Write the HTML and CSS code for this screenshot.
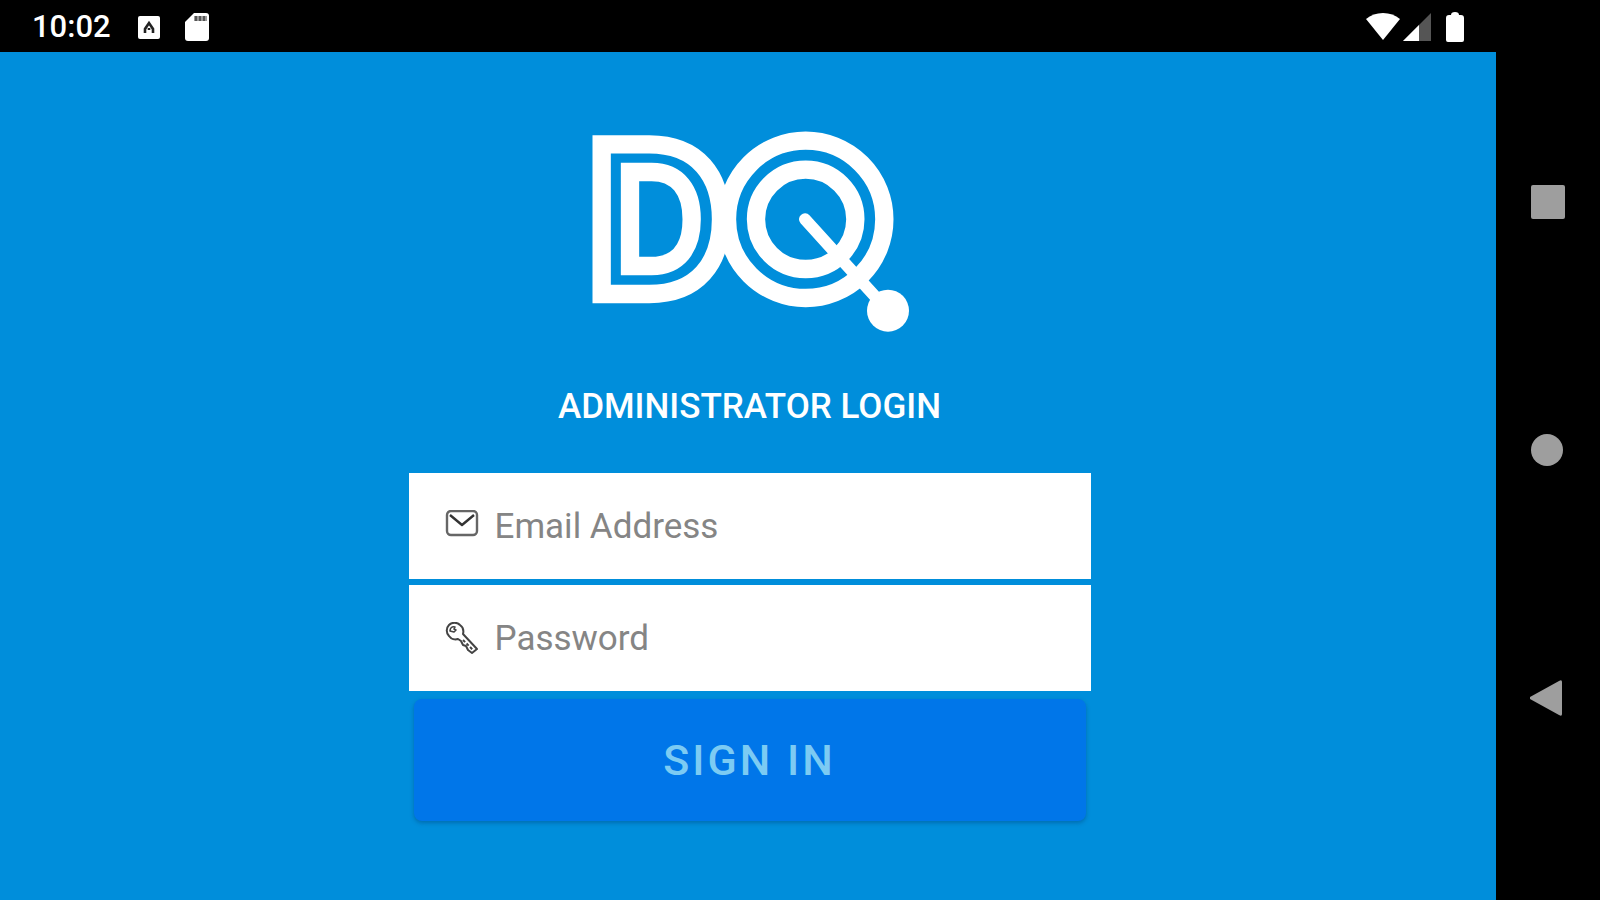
FILE: index.html
```html
<!DOCTYPE html>
<html lang="en">
<head>
<meta charset="utf-8">
<meta name="viewport" content="width=device-width, initial-scale=1">
<title>Administrator Login</title>
<link rel="stylesheet" href="styles.css">
</head>
<body>
<div class="screen">
  <div class="app">
    <header class="status">
      <time class="clock">10:02</time>
      <svg class="notice" width="22" height="23" viewBox="0 0 22 23" aria-hidden="true"><rect width="22" height="23" rx="2" fill="#fff"/><path d="M7 17V13L11 7L15 13V17M11 12V14" fill="none" stroke="#222" stroke-width="2.6"/></svg>
      <svg class="card" width="24" height="28" viewBox="0 0 24 28" aria-hidden="true"><path d="M9 0H21Q24 0 24 3V25Q24 28 21 28H3Q0 28 0 25V9Z" fill="#fff"/><path d="M9 3H22V8H9Z" fill="#999"/><path d="M11 3V8M15 3V8M19 3V8" stroke="#555" stroke-width="2"/></svg>
      <span class="signals">
        <svg width="34" height="28" viewBox="0 0 34 28" aria-hidden="true"><path d="M0 6Q7 0 17 0T34 6L17 27Z" fill="#fff"/></svg>
        <svg width="28" height="28" viewBox="0 0 28 28" aria-hidden="true"><path d="M28 0V28H0Z" fill="#555"/><path d="M16 12V28H0Z" fill="#fff"/></svg>
        <svg class="battery" width="18" height="30" viewBox="0 0 18 30" aria-hidden="true"><path d="M5 3Q5 0 9 0T13 3H15Q18 3 18 6V28Q18 30 16 30H2Q0 30 0 28V6Q0 3 3 3Z" fill="#fff"/></svg>
      </span>
    </header>
    <main class="login">
      <svg class="logo" viewBox="60 62 954 603" role="img" aria-label="DQ" fill="none" stroke="#fff" stroke-width="55">
        <path d="M92 102H235C380 102 450 197 450 327S380 551 235 551H92Z"/>
        <path d="M177 185H242C320 185 362 240 362 327S320 467 242 467H177Z"/>
        <circle cx="704" cy="327" r="236"/>
        <circle cx="704" cy="327" r="149"/>
        <path d="M702 327L950 600" stroke-width="36" stroke-linecap="round"/>
        <circle cx="951" cy="601" r="63" fill="#fff" stroke="none"/>
      </svg>
      <h1 class="title">ADMINISTRATOR LOGIN</h1>
      <form class="form">
        <label class="field">
          <svg width="34" height="34" viewBox="0 0 34 34" fill="none" stroke="#666" stroke-width="2.4" aria-hidden="true"><rect x="2" y="1" width="30" height="24" rx="4"/><path d="M5 5L17 15L29 5" stroke="#333" stroke-linejoin="round"/></svg>
          <input type="email" placeholder="Email Address" aria-label="Email Address">
        </label>
        <label class="field">
          <svg width="34" height="34" viewBox="0 0 34 34" fill="none" stroke="#444" stroke-width="2" stroke-linejoin="round" aria-hidden="true"><path d="M18 12C19 8 18 5 15 3C12 0 7 0 4 3C1 6 1 11 4 14C6 17 10 18 13 17L16 19L18 23L21 24L23 28L27 31L32 27Z"/><path d="M18 18L28 28" stroke-dasharray="3 2"/><path d="M5 9C5 6 7 4 10 5L9 7L11 8L9 10L5 9Z" stroke-width="1.6"/></svg>
          <input type="password" placeholder="Password" aria-label="Password">
        </label>
        <button class="submit" type="submit">SIGN IN</button>
      </form>
    </main>
  </div>
  <nav class="navbar" aria-label="System navigation">
    <button type="button" aria-label="Recent apps"><svg width="36" height="36" viewBox="0 0 36 36"><rect x="1" y="1" width="34" height="34" rx="2"/></svg></button>
    <button type="button" aria-label="Home"><svg width="36" height="36" viewBox="0 0 36 36"><circle cx="17" cy="18" r="16"/></svg></button>
    <button type="button" aria-label="Back"><svg width="36" height="36" viewBox="0 0 36 36"><path d="M0 17Q-2 18 0 19L29 35Q32 37 32 34V2Q32-1 29 1Z"/></svg></button>
  </nav>
</div>
</body>
</html>
```
FILE: styles.css
```css
* {
  box-sizing: border-box;
}

body {
  margin: 0;
  background: #000;
  font-family: Roboto, "Liberation Sans", sans-serif;
}

.screen {
  display: flex;
  min-height: 100vh;
}

.app {
  flex: 1;
  display: flex;
  flex-direction: column;
}

.status {
  display: flex;
  align-items: center;
  height: 52px;
  padding: 2px 32px 0;
  background: #000;
  color: #fff;
}

.status svg {
  display: block;
}

.clock {
  font-size: 31px;
  font-weight: 500;
  line-height: 40px;
}

.notice {
  margin-left: 27px;
}

.card {
  margin-left: 25px;
}

.signals {
  display: flex;
  align-items: center;
  gap: 3px;
  margin-left: auto;
}

.battery {
  margin-left: 12px;
}

.login {
  flex: 1;
  display: flex;
  flex-direction: column;
  align-items: center;
  padding: 79px 24px 60px 27px;
  background: #008edb;
}

.logo {
  display: block;
  width: 318px;
}

.title {
  margin: 53px 0 44px;
  color: #fff;
  font-size: 35px;
  font-weight: 500;
  line-height: 44px;
}

.form {
  display: flex;
  flex-direction: column;
  gap: 6px;
  width: 100%;
  max-width: 682px;
}

.field {
  display: flex;
  align-items: center;
  gap: 16px;
  padding: 32px 36px 31px;
  background: #fff;
}

.field svg {
  flex: none;
}

.field input {
  flex: 1;
  min-width: 0;
  padding: 0;
  border: 0;
  outline: 0;
  background: none;
  color: #333;
  font: 400 35px/43px Roboto, "Liberation Sans", sans-serif;
}

.field input::placeholder {
  color: #858585;
  opacity: 1;
}

.submit {
  margin: 2px 5px 0;
  padding: 35px;
  border: 0;
  border-radius: 8px;
  background: #0076e9;
  box-shadow: 0 2px 4px rgba(0, 60, 110, 0.4);
  color: #7ccbf3;
  font: 500 43px/52px Roboto, "Liberation Sans", sans-serif;
  letter-spacing: 3px;
}

.navbar {
  display: flex;
  flex-direction: column;
  align-items: center;
  justify-content: center;
  gap: 212px;
  width: 104px;
}

.navbar button {
  padding: 0;
  border: 0;
  background: none;
}

.navbar svg {
  display: block;
  fill: #9e9e9e;
}
```
